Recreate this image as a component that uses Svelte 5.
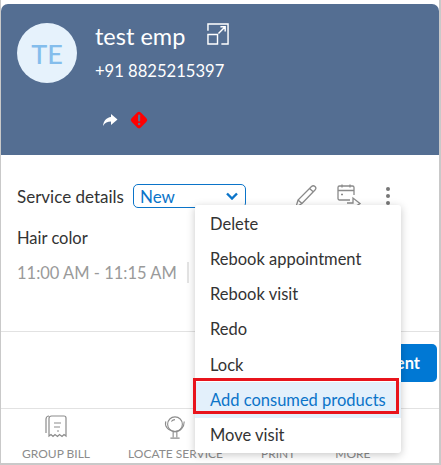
<script>
  const menuItems = [
    "Delete",
    "Rebook appointment",
    "Rebook visit",
    "Redo",
    "Lock",
    "Add consumed products",
    "Move visit",
  ];
</script>

<div class="frame">
  <header class="head">
    <div class="avatar">TE</div>
    <div class="info">
      <div class="name-row">
        <span class="name">test emp</span>
        <svg class="open" width="22" height="22" viewBox="0 0 23 23" fill="none" stroke="#fff" stroke-width="1.5">
          <path d="M1 8V1h21v21h-7M1 12h10v10H1zM12 11l7-7M14 4h5v5" />
        </svg>
      </div>
      <div class="phone">+91 8825215397</div>
      <div class="flags">
        <svg width="16" height="14" viewBox="0 0 16 14"><path fill="#fff" d="M9 1l6.500 5.500L9 12V8.500C5.500 8.500 3 9.500 1 13 1.500 8 4.500 4.500 9 4z" /></svg>
        <svg width="20" height="20" viewBox="0 0 20 20">
          <rect x="3.500" y="3.500" width="13" height="13" rx="2.500" fill="#f00" transform="rotate(45 10 10)" />
          <rect x="9" y="4.500" width="2.200" height="7" rx="1" fill="#5a6f90" />
          <circle cx="10.100" cy="14" r="1.300" fill="#5a6f90" />
        </svg>
      </div>
    </div>
  </header>

  <section class="details">
    <div class="row">
      <span class="label">Service details</span>
      <div class="status">
        <span>New</span>
        <svg width="12" height="8" viewBox="0 0 12 8" fill="none" stroke="#0b74c9" stroke-width="2.400"><path d="M1 1.500l5 5 5-5" /></svg>
      </div>
      <div class="actions">
        <svg width="24" height="24" viewBox="0 0 24 24" fill="none" stroke="#8a8a8a" stroke-width="1.300">
          <path d="M2 23l2-7L17.500 2.500c1-1 2.500-1 3.500 0s1 2.500 0 3.500L8 19.500zM4 16l4 3.500M15.500 4.500l4 3.500" />
        </svg>
        <svg width="24" height="24" viewBox="0 0 24 24" fill="none" stroke="#8a8a8a" stroke-width="1.300">
          <path d="M13 16H2.500A1.500 1.500 0 0 1 1 14.500v-11A1.500 1.500 0 0 1 2.500 2h13A1.500 1.500 0 0 1 17 3.500V11M1 6.500h16M5 .5v3M13 .5v3M10 19h6v-5l7 5.500-7 4.500v-2h-6M7 22h2M4 10.500h2" />
        </svg>
        <svg class="dots" width="6" height="20" viewBox="0 0 6 20" fill="#777">
          <circle cx="3" cy="3" r="2" /><circle cx="3" cy="10" r="2" /><circle cx="3" cy="17" r="2" />
        </svg>
      </div>
    </div>
    <div class="service">Hair color</div>
    <div class="time"><span>11:00 AM - 11:15 AM</span><i class="sep"></i></div>
  </section>

  <section class="cta">
    <button class="pay">Checkout client</button>
  </section>

  <footer class="foot">
    <div class="tool">
      <svg width="22" height="24" viewBox="0 0 22 24" fill="none" stroke="#8c8c8c" stroke-width="1.200">
        <path d="M4 21V3.500A2.500 2.500 0 0 1 6.500 1H19a2 2 0 0 1 2 2v18l-2-1.500-2 2-2.500-2-2 2-2.500-2-2 2-2-2zM1 18V4a3 3 0 0 1 3-3M9 8h7M9 12h6M12 16h2" />
      </svg>
      <span>GROUP BILL</span>
    </div>
    <div class="tool locate">
      <svg width="24" height="26" viewBox="0 0 24 26" fill="none" stroke="#8c8c8c" stroke-width="1.200">
        <circle cx="12" cy="10" r="8" /><path d="M2 7c-1.500 5 2 10 10 11 6 0 10-5 10-11M10 18v6M14 18v6M7 25h10M8 7a5 5 0 0 1 4-2" />
      </svg>
      <span>LOCATE SERVICE</span>
    </div>
    <div class="tool print"><span>PRINT</span></div>
    <div class="tool more"><span>MORE</span></div>
  </footer>

  <ul class="menu">
    {#each menuItems as item}
      <li class:active={item === "Add consumed products"}>{item}</li>
    {/each}
  </ul>
</div>

<style>
  :global(body) {
    margin: 0;
    background: #fff;
  }

  .frame {
    position: relative;
    box-sizing: border-box;
    width: 441px;
    height: 465px;
    padding-top: 4px;
    border: 1px solid #c9c9c9;
    border-width: 0 2px 2px 1px;
    font-family: Lato, sans-serif;
    color: #333;
    overflow: hidden;
    display: flex;
    flex-direction: column;
  }

  .head {
    height: 151px;
    background: #546e92;
    border-radius: 7px 7px 0 0;
    display: flex;
    padding: 19px 0 0 16px;
    box-sizing: border-box;
    gap: 18px;
    color: #fff;
    flex-shrink: 0;
  }

  .avatar {
    width: 60px;
    height: 60px;
    border-radius: 50%;
    background: #e6f2fc;
    color: #84bdec;
    font-size: 27px;
    font-weight: 500;
    display: flex;
    align-items: center;
    justify-content: center;
  }

  .name-row {
    display: flex;
    align-items: center;
    gap: 22px;
    height: 26px;
  }

  .name {
    font-size: 23.500px;
  }

  .open {
    margin-top: -4px;
  }

  .phone {
    margin-top: 12px;
    font-size: 16.600px;
  }

  .flags {
    display: flex;
    align-items: center;
    gap: 11px;
    margin: 29px 0 0 7px;
  }

  .details {
    height: 177px;
    box-sizing: border-box;
    padding: 29px 0 0 16px;
    border-bottom: 1px solid #e2e2e2;
    flex-shrink: 0;
  }

  .row {
    display: flex;
    align-items: center;
    height: 24px;
    font-size: 17px;
  }

  .status {
    box-sizing: border-box;
    width: 113px;
    height: 24px;
    margin-left: 9px;
    padding: 0 7px 0 6px;
    border: 1px solid #0b74c9;
    border-radius: 5px;
    color: #0b74c9;
    display: flex;
    align-items: center;
    justify-content: space-between;
  }

  .actions {
    display: flex;
    align-items: center;
    margin-left: 48px;
    gap: 19px;
  }

  .dots {
    margin-left: 5px;
  }

  .service {
    margin-top: 20px;
    font-size: 16.500px;
    line-height: 20px;
  }

  .time {
    margin-top: 14px;
    display: flex;
    align-items: center;
    font-size: 16.500px;
    color: #9a9a9a;
    height: 21px;
  }

  .sep {
    width: 2px;
    height: 21px;
    margin-left: 10px;
    background: #e4e4e4;
  }

  .cta {
    height: 77px;
    box-sizing: border-box;
    padding: 12px 2px 0 0;
    border-bottom: 1px solid #e2e2e2;
    display: flex;
    justify-content: flex-end;
    flex-shrink: 0;
  }

  .pay {
    height: 38px;
    padding: 0 17px;
    border: 0;
    border-radius: 5px;
    background: #0078d4;
    color: #fff;
    font: 700 16.500px Lato, sans-serif;
  }

  .foot {
    flex: 1;
    display: flex;
    padding: 6px 0 0 21px;
    position: relative;
  }

  .tool {
    display: flex;
    flex-direction: column;
    align-items: center;
    justify-content: flex-end;
    font-size: 12px;
    color: #8c8c8c;
    height: 46px;
    gap: 7px;
  }

  .locate {
    margin-left: 38px;
  }

  .print {
    margin-left: 38px;
  }

  .more {
    margin-left: 40px;
  }

  .menu {
    position: absolute;
    top: 205px;
    left: 194px;
    width: 206px;
    height: 248px;
    box-sizing: border-box;
    margin: 0;
    padding: 1px 0 0;
    list-style: none;
    background: #fff;
    border-radius: 3px;
    box-shadow: 0 2px 8px rgba(0, 0, 0, 0.22);
    display: flex;
    flex-direction: column;
  }

  .menu li {
    height: 35.300px;
    padding-left: 15px;
    display: flex;
    align-items: center;
    font-size: 16.500px;
    color: #333;
  }

  .menu li.active {
    position: relative;
    color: #0b74c9;
    background: #e3f0fb;
  }

  .menu li.active::after {
    content: "";
    position: absolute;
    left: -2px;
    right: 2px;
    top: -4px;
    bottom: 4px;
    border: 3px solid #e8141c;
  }
</style>
